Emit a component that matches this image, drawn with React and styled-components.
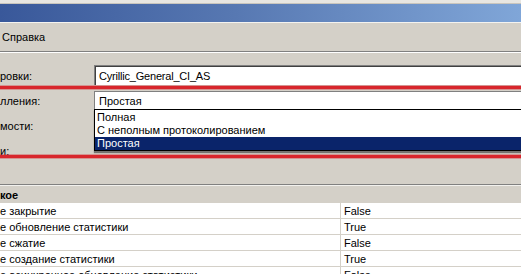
import styled, { createGlobalStyle } from 'styled-components';

const GlobalStyle = createGlobalStyle`
    html, body {
        margin: 0;
        padding: 0;
        background: #d4d0c8;
        overflow: hidden;
    }
    body {
        font-family: "Liberation Sans", Arial, sans-serif;
        font-size: 11px;
        color: #000000;
    }
`

const props = [
    { name: 'е закрытие', value: 'False' },
    { name: 'е обновление статистики', value: 'True' },
    { name: 'е сжатие', value: 'False' },
    { name: 'е создание статистики', value: 'True' },
    { name: 'е асинхронное обновление статистики', value: 'False' },
]

export default function App(){
    return (
    <Window>
        <GlobalStyle />
        <TopFrame />
        <TitleBar />
        <MenuBar>
            <MenuItem>Справка</MenuItem>
        </MenuBar>
        <Form>
            <Row>
                <Label>ровки:</Label>
                <TextBox>Cyrillic_General_CI_AS</TextBox>
            </Row>
            <Row>
                <Label>лления:</Label>
                <Combo>
                    Простая
                    <DropList>
                        <DropItem>Полная</DropItem>
                        <DropItem>С неполным протоколированием</DropItem>
                        <DropItem selected>Простая</DropItem>
                    </DropList>
                </Combo>
            </Row>
            <Row>
                <Label>мости:</Label>
                <Combo>SQL Server 2005 (90)</Combo>
            </Row>
            <Row>
                <Label>и:</Label>
            </Row>
        </Form>
        <Grid>
            <Category>кое</Category>
            {props.map((p) => (
                <PropRow key={p.name}>
                    <PropName>{p.name}</PropName>
                    <PropValue>{p.value}</PropValue>
                </PropRow>
            ))}
        </Grid>
        <Marker top={86} />
        <Marker top={155} />
    </Window>
    )
}

const Window = styled.div`
    position: relative;
    width: 521px;
    height: 274px;
    overflow: hidden;
    background: #d4d0c8;
`

const TopFrame = styled.div`
    height: 3px;
    background: #e8e6e1;
    border-bottom: 1px solid #c9c5bd;
`

const TitleBar = styled.div`
    height: 18px;
    background: linear-gradient(to right, #39589a 0%, #5778b2 45%, #80a6d8 100%);
    border-bottom: 1px solid #f4f3f0;
`

const MenuBar = styled.div`
    height: 28px;
    display: flex;
    align-items: center;
    padding: 0 2px;
    border-bottom: 1px solid #808080;
    box-shadow: 0 1px 0 #ffffff;
`

const MenuItem = styled.span`
    padding-top: 0;
`

const Form = styled.div`
    padding-top: 10px;
    display: flex;
    flex-direction: column;
`

const Row = styled.div`
    height: 25px;
    display: grid;
    grid-template-columns: 94px 1fr;
    align-items: center;
`

const Label = styled.div`
    padding-top: 2px;
`

const TextBox = styled.div`
    height: 20px;
    box-sizing: border-box;
    background: #ffffff;
    border-top: 1px solid #808080;
    border-left: 1px solid #808080;
    box-shadow: inset 1px 1px 0 #404040;
    padding: 4px 0 0 4px;
    margin-right: -20px;
    white-space: nowrap;
    letter-spacing: -0.2px;
`

const Combo = styled.div`
    position: relative;
    height: 18px;
    box-sizing: border-box;
    background: #ffffff;
    border-top: 1px solid #808080;
    border-left: 1px solid #808080;
    padding: 3px 0 0 4px;
    margin-right: -20px;
    white-space: nowrap;
`

const DropList = styled.div`
    position: absolute;
    top: 100%;
    left: -1px;
    right: 0;
    z-index: 2;
    background: #ffffff;
    border: 1px solid #000000;
    padding-top: 1px;
    box-shadow: 0 2px 1px rgba(0, 0, 0, 0.45);
`

const DropItem = styled.div`
    height: 13px;
    line-height: 13px;
    padding-left: 2px;
    background: ${(p) => (p.selected ? '#0a246a' : '#ffffff')};
    color: ${(p) => (p.selected ? '#ffffff' : '#000000')};
`

const Grid = styled.div`
    margin-top: 22px;
    border-top: 1px solid #808080;
    background: #ffffff;
`

const Category = styled.div`
    height: 17px;
    line-height: 19px;
    border-top: 1px solid #f2f1ee;
    background: #d4d0c8;
    font-weight: 700;
`

const PropRow = styled.div`
    display: grid;
    grid-template-columns: 340px 1fr;
    height: 16px;
    box-sizing: border-box;
    border-bottom: 1px solid #d4d0c8;
    line-height: 17px;
`

const PropName = styled.div`
    white-space: nowrap;
    overflow: hidden;
`

const PropValue = styled.div`
    border-left: 1px solid #d4d0c8;
    padding-left: 3px;
`

const Marker = styled.div`
    position: absolute;
    left: 0;
    right: 0;
    top: ${(p) => p.top}px;
    height: 3px;
    background: #d8262c;
    box-shadow: 0 -1px 0 rgba(216, 38, 44, 0.35), 0 1px 0 rgba(216, 38, 44, 0.35);
`
